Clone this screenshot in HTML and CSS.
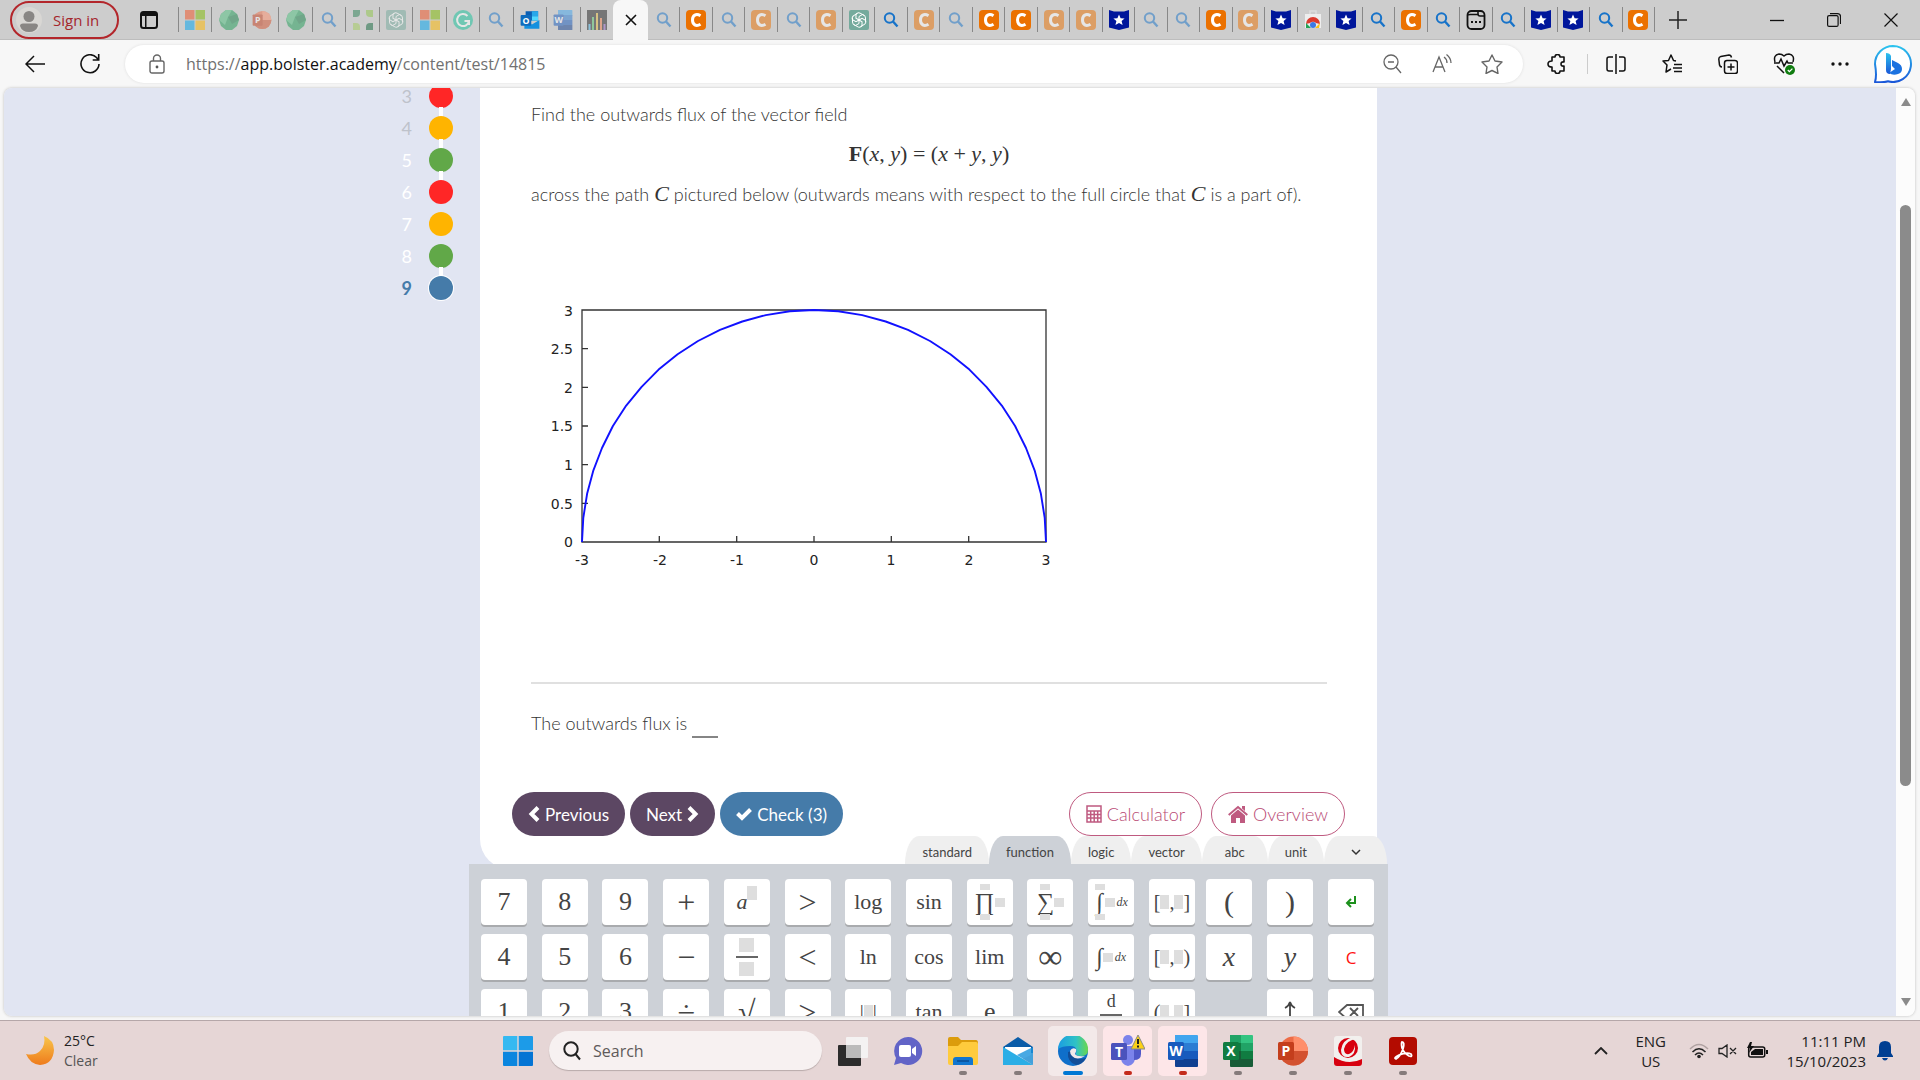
FILE: index.html
```html
<!DOCTYPE html>
<html lang="en">
<head>
    <meta charset="UTF-8">
    <meta name="viewport" content="width=device-width, initial-scale=1.0">
    <title>Bolster Academy</title>
    <link rel="stylesheet" href="styles.css">
</head>
<body>

    <!-- shared icons -->
    <svg class="sprite" xmlns="http://www.w3.org/2000/svg">
        <symbol id="ms" viewBox="0 0 20 20"><path fill="#f25022" d="M0 0h9.500v9.500H0z"/><path fill="#7fba00" d="M10.500 0H20v9.500h-9.500z"/><path fill="#00a4ef" d="M0 10.500h9.500V20H0z"/><path fill="#ffb900" d="M10.500 10.500H20V20h-9.500z"/></symbol>
        <symbol id="gem" viewBox="0 0 20 20"><path fill="#1f9d57" d="M7 0h6l5 4 2 6-2 6-5 4H7l-5-4-2-6 2-6z"/><path fill="#4fc07f" d="M7 0h6l-4 7-7-3zM2 4l7 3-3 8-6-5z"/><path fill="#168048" d="M9 7l9-3 2 6-7 4z"/></symbol>
        <symbol id="find" viewBox="0 0 20 20"><circle cx="8.500" cy="8" r="4.700" fill="none" stroke="#1773c9" stroke-width="2"/><path stroke="#1773c9" stroke-width="2.400" d="M12 11.500l4.500 5"/></symbol>
        <symbol id="squares" viewBox="0 0 20 20"><path fill="#2d8257" d="M0 0h7v3q0 4-4 4H0z"/><path fill="#8fc74a" d="M13 0h7v7h-3q-4 0-4-4z"/><path fill="#a3cc5b" d="M0 13h3q4 0 4 4v3H0z"/><path fill="#14683d" d="M13 20v-3q0-4 4-4h3v7z"/></symbol>
        <symbol id="gpt" viewBox="0 0 20 20"><rect width="20" height="20" rx="2" fill="#74aa9c"/><g fill="none" stroke="#fff" stroke-width="1"><path id="petal" d="M10 10.500V6.500l3.500-2q3 .5 3 3.500v4"/><path d="M10 10.500V6.500l3.500-2q3 .5 3 3.500v4" transform="rotate(60 10 10)"/><path d="M10 10.500V6.500l3.500-2q3 .5 3 3.500v4" transform="rotate(120 10 10)"/><path d="M10 10.500V6.500l3.500-2q3 .5 3 3.500v4" transform="rotate(180 10 10)"/><path d="M10 10.500V6.500l3.500-2q3 .5 3 3.500v4" transform="rotate(240 10 10)"/><path d="M10 10.500V6.500l3.500-2q3 .5 3 3.500v4" transform="rotate(300 10 10)"/></g></symbol>
        <symbol id="grammarly" viewBox="0 0 20 20"><circle cx="10" cy="10" r="10" fill="#15c39a"/><path fill="none" stroke="#fff" stroke-width="2" d="M14.500 6A6 6 0 1 0 16 11h-4.500M16 11v4"/></symbol>
        <symbol id="bars" viewBox="0 0 20 20"><path fill="#222" d="M0 0h20v20H0z"/><path fill="#4cb8ec" d="M1.500 14h2v6h-2z"/><path fill="#53c26b" d="M5 7h2v13H5z"/><path fill="#e2b93b" d="M9 3h2v17H9z"/><path fill="#ee7c4b" d="M13 8h2v12h-2z"/><path fill="#9261c4" d="M16.500 14h2v6h-2z"/></symbol>
        <symbol id="chegg" viewBox="0 0 20 20"><rect width="20" height="20" rx="4" fill="#eb7100"/><path fill="none" stroke="#fff" stroke-width="3" d="M14.500 5.800C10 3 6.500 5.500 6.500 10s3.500 7 8 4.200"/></symbol>
        <symbol id="star-flag" viewBox="0 0 20 20"><path fill="#00169b" d="M0 0l5 1.500h10L20 0v17.500L10 20 0 17.500z"/><path fill="#fff" d="M10 4.500l1.600 3.700 4 .3-3 2.600 1 4-3.600-2.200-3.600 2.200 1-4-3-2.600 4-.3z"/></symbol>
        <symbol id="store" viewBox="0 0 20 20"><path fill="#eee" d="M2 4h16v14H2z"/><path fill="none" stroke="#ddd" stroke-width="1.500" d="M7 4V1h6v3"/><path fill="#dc3b2e" d="M3 14a7 7 0 0 1 14 0l-4-1a4 4 0 0 0-6 0z"/><path fill="#21a354" d="M3 13l5 5H3z"/><path fill="#fbc116" d="M17 13l-5 5h4z"/><circle cx="10" cy="15" r="3" fill="#3c79e6"/></symbol>
        <symbol id="app" viewBox="0 0 20 20"><rect x="1.500" y="1" width="17" height="18" rx="4" fill="none" stroke="#111" stroke-width="1.800"/><path fill="none" stroke="#111" stroke-width="1.600" d="M12 1v3q0 2 2 2h4.500M2 5.500q0-1 2-1h8"/><path stroke="#111" stroke-width="2" stroke-dasharray="2 2" d="M5 12h10"/></symbol>
        <symbol id="word" viewBox="0 0 30 32"><path fill="#41a5ee" d="M7 0h22q1 0 1 1v8H7z"/><path fill="#2b7cd3" d="M7 8h23v8H7z"/><path fill="#185abd" d="M7 16h23v8H7z"/><path fill="#103f91" d="M7 24h23v7q0 1-1 1H8q-1 0-1-1z"/><rect y="7" width="16" height="18" rx="1.500" fill="#185abd"/><text x="8" y="21" class="logo-letter">W</text></symbol>
        <symbol id="excel" viewBox="0 0 30 32"><path fill="#21a366" d="M7 0h12v8H7z"/><path fill="#33c481" d="M18 0h11q1 0 1 1v7H18z"/><path fill="#107c41" d="M7 8h12v8H7zM18 16h12v8H18z"/><path fill="#21a366" d="M18 8h12v8H18z"/><path fill="#185c37" d="M7 16h11v8h12v7q0 1-1 1H8q-1 0-1-1z"/><rect y="7" width="16" height="18" rx="1.500" fill="#107c41"/><text x="8" y="21" class="logo-letter">X</text></symbol>
        <symbol id="ppt" viewBox="0 0 30 32"><circle cx="15.500" cy="16" r="14.500" fill="#ed6c47"/><path fill="#ff8f6b" d="M15.500 1.500A14.500 14.500 0 0 1 30 16H15.500z"/><path fill="#d35230" d="M1 16h29a14.500 14.500 0 0 1-29 0z"/><rect y="7" width="16" height="18" rx="1.500" fill="#c43e1c"/><text x="8" y="21" class="logo-letter">P</text></symbol>
        <symbol id="outlook" viewBox="0 0 30 32"><path fill="#0a5fb4" d="M8 2h20v15H8z"/><path fill="#28a8ea" d="M18 2h10v8H18z"/><path fill="#50d9ff" d="M18 10h10v7H18z"/><path fill="#1490df" d="M6 16l12 7 12-7v14H6z"/><rect y="8" width="17" height="17" rx="1.500" fill="#0f6cbd"/><text x="8.500" y="22" class="logo-letter">O</text></symbol>
        <symbol id="winlogo" viewBox="0 0 30 30"><path fill="#35b9f1" d="M0 1q0-1 1-1h13.300v14.300H0z"/><path fill="#1c9be8" d="M15.700 0H29q1 0 1 1v13.300H15.700z"/><path fill="#0b86df" d="M0 15.700h14.300V30H1q-1 0-1-1z"/><path fill="#0474d4" d="M15.700 15.700H30V29q0 1-1 1H15.700z"/></symbol>
    </svg>

    <header class="tab-strip">
        <button class="sign-in">
            <svg width="26" height="26" viewBox="0 0 26 26"><circle cx="13" cy="13" r="13" fill="#d9d7d4"/><circle cx="13" cy="9.500" r="5.500" fill="#898684"/><path fill="#898684" d="M4 19q0-2.500 3-2.500h12q3 0 3 2.500-2 6-9 6t-9-6z"/></svg>
            Sign in
        </button>
        <button class="tab-menu" aria-label="Tab actions">
            <svg width="18" height="18" viewBox="0 0 18 18"><rect x="1" y="1" width="16" height="16" rx="2.500" fill="none" stroke="#111" stroke-width="2"/><path fill="#111" d="M1 1h16v4H1zM5 5h1.500v12H5z"/></svg>
        </button>

        <nav class="tabs">
            <div class="tab-group tab-group-left">
                <button class="tab dim"><svg><use href="#ms"/></svg></button>
                <button class="tab dim"><svg><use href="#gem"/></svg></button>
                <button class="tab dim"><svg><use href="#ppt"/></svg></button>
                <button class="tab dim"><svg><use href="#gem"/></svg></button>
                <button class="tab dim"><svg><use href="#find"/></svg></button>
                <button class="tab dim"><svg><use href="#squares"/></svg></button>
                <button class="tab dim"><svg><use href="#gpt"/></svg></button>
                <button class="tab dim"><svg><use href="#ms"/></svg></button>
                <button class="tab dim"><svg><use href="#grammarly"/></svg></button>
                <button class="tab dim"><svg><use href="#find"/></svg></button>
                <button class="tab"><svg><use href="#outlook"/></svg></button>
                <button class="tab dim"><svg><use href="#word"/></svg></button>
                <button class="tab dim"><svg><use href="#bars"/></svg></button>
            </div>
            <button class="tab-active" aria-label="Close tab">
                <svg width="12" height="12" viewBox="0 0 12 12"><path stroke="#111" stroke-width="1.600" d="M1 1l10 10M11 1L1 11"/></svg>
            </button>
            <div class="tab-group tab-group-right">
                <button class="tab dim"><svg><use href="#find"/></svg></button>
                <button class="tab"><svg><use href="#chegg"/></svg></button>
                <button class="tab dim"><svg><use href="#find"/></svg></button>
                <button class="tab dim"><svg><use href="#chegg"/></svg></button>
                <button class="tab dim"><svg><use href="#find"/></svg></button>
                <button class="tab dim"><svg><use href="#chegg"/></svg></button>
                <button class="tab"><svg><use href="#gpt"/></svg></button>
                <button class="tab"><svg><use href="#find"/></svg></button>
                <button class="tab dim"><svg><use href="#chegg"/></svg></button>
                <button class="tab dim"><svg><use href="#find"/></svg></button>
                <button class="tab"><svg><use href="#chegg"/></svg></button>
                <button class="tab"><svg><use href="#chegg"/></svg></button>
                <button class="tab dim"><svg><use href="#chegg"/></svg></button>
                <button class="tab dim"><svg><use href="#chegg"/></svg></button>
                <button class="tab"><svg><use href="#star-flag"/></svg></button>
                <button class="tab dim"><svg><use href="#find"/></svg></button>
                <button class="tab dim"><svg><use href="#find"/></svg></button>
                <button class="tab"><svg><use href="#chegg"/></svg></button>
                <button class="tab dim"><svg><use href="#chegg"/></svg></button>
                <button class="tab"><svg><use href="#star-flag"/></svg></button>
                <button class="tab"><svg><use href="#store"/></svg></button>
                <button class="tab"><svg><use href="#star-flag"/></svg></button>
                <button class="tab"><svg><use href="#find"/></svg></button>
                <button class="tab"><svg><use href="#chegg"/></svg></button>
                <button class="tab"><svg><use href="#find"/></svg></button>
                <button class="tab"><svg><use href="#app"/></svg></button>
                <button class="tab"><svg><use href="#find"/></svg></button>
                <button class="tab"><svg><use href="#star-flag"/></svg></button>
                <button class="tab"><svg><use href="#star-flag"/></svg></button>
                <button class="tab"><svg><use href="#find"/></svg></button>
                <button class="tab"><svg><use href="#chegg"/></svg></button>
            </div>
        </nav>

        <button class="new-tab" aria-label="New tab"><svg width="18" height="18" viewBox="0 0 18 18"><path stroke="#222" stroke-width="1.500" d="M9 0v18M0 9h18"/></svg></button>
        <div class="window-controls">
            <button aria-label="Minimize"><svg width="14" height="14" viewBox="0 0 14 14"><path stroke="#111" stroke-width="1.300" d="M0 7.500h14"/></svg></button>
            <button aria-label="Restore"><svg width="14" height="14" viewBox="0 0 14 14"><g fill="none" stroke="#111" stroke-width="1.200"><rect x=".6" y="2.600" width="10.500" height="10.800" rx="1.500"/><path d="M3 .6h7.500q3 0 3 3V11"/></g></svg></button>
            <button aria-label="Close"><svg width="14" height="14" viewBox="0 0 14 14"><path stroke="#111" stroke-width="1.200" d="M.5.500l13 13M13.500.500l-13 13"/></svg></button>
        </div>
    </header>

    <div class="toolbar">
        <button class="tool-button" aria-label="Back"><svg width="20" height="18" viewBox="0 0 20 18"><path fill="none" stroke="#111" stroke-width="1.500" d="M20 9H1M9 1L1 9l8 8"/></svg></button>
        <button class="tool-button" aria-label="Refresh"><svg width="20" height="20" viewBox="0 0 20 20"><path fill="none" stroke="#111" stroke-width="1.600" d="M19 10A9 9 0 1 1 16.500 3.500L18.500 6M18.700 0v6h-6"/></svg></button>
        <div class="address-bar">
            <svg width="16" height="20" viewBox="0 0 16 20"><g fill="none" stroke="#666" stroke-width="1.400"><rect x="1" y="7" width="14" height="12" rx="2"/><path d="M4.500 7V4.500a3.500 3.500 0 0 1 7 0V7"/></g><circle cx="8" cy="13" r="1.400" fill="#555"/></svg>
            <span class="url">https://<b>app.bolster.academy</b>/content/test/14815</span>
            <button aria-label="Zoom out"><svg width="20" height="20" viewBox="0 0 20 20"><g fill="none" stroke="#666" stroke-width="1.300"><circle cx="9" cy="8" r="7"/><path d="M14 13l5 6M6 8h6"/></g></svg></button>
            <button aria-label="Read aloud"><svg width="20" height="20" viewBox="0 0 20 20"><g fill="none" stroke="#666" stroke-width="1.300"><path d="M1 18L7 3l6 15M3 13h8M12 3q3 2 3 6M14.500.500Q19 4 19 9"/></g></svg></button>
            <button aria-label="Favorite"><svg width="22" height="20" viewBox="0 0 22 20"><path fill="none" stroke="#666" stroke-width="1.400" stroke-linejoin="round" d="M11 1l3 6 7 1-5 5 1 6.500-6-3-6 3L6 13 1 8l7-1z"/></svg></button>
        </div>
        <div class="extensions">
            <button aria-label="Extensions"><svg width="20" height="20" viewBox="0 0 20 20"><path fill="none" stroke="#111" stroke-width="1.600" stroke-linejoin="round" d="M5 3h3q0-2.500 2.500-2.500T13 3h4v5q-3-.5-3 2t3 2v5h-4q0 2.500-2.500 2.500T8 17H5v-4q-4 0-4-3t4-3z"/></svg></button>
            <span class="divider"></span>
            <button aria-label="Split screen"><svg width="20" height="20" viewBox="0 0 20 20"><path fill="none" stroke="#111" stroke-width="1.500" d="M7 3H3Q1 3 1 5v10q0 2 2 2h4M13 3h4q2 0 2 2v10q0 2-2 2h-4M10 0v20"/></svg></button>
            <button aria-label="Favorites"><svg width="20" height="20" viewBox="0 0 20 20"><path fill="none" stroke="#111" stroke-width="1.500" stroke-linejoin="round" d="M14 7l-2.500-.5L9 1 6.500 6.500 1 7l4 4-1 7 5-3M12 10.500h8M11 14h9M12 17.500h8"/></svg></button>
            <button aria-label="Collections"><svg width="20" height="20" viewBox="0 0 20 20"><g fill="none" stroke="#111" stroke-width="1.500"><rect x="6.500" y="6.500" width="13" height="13" rx="2.500"/><path d="M4 13q-2 0-2.500-2L.800 5q0-2 2-2.500L11 1q2 0 2.500 2.500M13 9.500v7M9.500 13h7"/></g></svg></button>
            <button aria-label="Browser essentials"><svg width="22" height="22" viewBox="0 0 22 22"><path fill="none" stroke="#111" stroke-width="1.500" d="M2 9Q0 2 6 1q3 0 5 2 2-2 5-2 6 1 4 8M1 10h5l2-4 3 7 3-5 1 2h5M4 13l7 7"/><circle cx="17" cy="17" r="5" fill="#107c10"/><path fill="none" stroke="#fff" stroke-width="1.300" d="M14.800 17l1.600 1.600 3-3"/></svg></button>
            <button aria-label="Settings"><svg width="18" height="4" viewBox="0 0 18 4"><g fill="#111"><circle cx="2" cy="2" r="1.700"/><circle cx="9" cy="2" r="1.700"/><circle cx="16" cy="2" r="1.700"/></g></svg></button>
            <button aria-label="Bing chat"><svg width="38" height="38" viewBox="0 0 38 38"><defs><linearGradient id="bing" x1="0" y1="0" x2="0" y2="1"><stop offset="0" stop-color="#2cc3ee"/><stop offset="1" stop-color="#1a56d8"/></linearGradient></defs><path fill="#fff" stroke="url(#bing)" stroke-width="2" d="M19 1a18 18 0 1 1-5 35.300q-6 1.700-13 .700 2-6 0-18A18 18 0 0 1 19 1z"/><path fill="url(#bing)" d="M12 8q4 0 5 3v13l-1 5q-4 0-4-4z"/><path fill="#1b72e0" d="M18 15l6 3q4 2 4 6t-4 5q-5 2-9-1l6-4-3-3z"/></svg></button>
        </div>
    </div>

    <div class="viewport">
        <main class="page">
            <aside class="progress">
                <ol>
                    <li class="linked muted">3<span class="dot red"></span></li>
                    <li class="linked muted">4<span class="dot yellow"></span></li>
                    <li class="linked">5<span class="dot green"></span></li>
                    <li>6<span class="dot red"></span></li>
                    <li>7<span class="dot yellow"></span></li>
                    <li class="linked">8<span class="dot green"></span></li>
                    <li class="current">9<span class="dot blue"></span></li>
                </ol>
            </aside>

            <div class="content">
                <section class="card">
                    <div class="question">
                        <p>Find the outwards flux of the vector field</p>
                        <p class="formula"><b>F</b>(<i>x</i>, <i>y</i>) = (<i>x</i> + <i>y</i>, <i>y</i>)</p>
                        <p>across the path <i class="math">C</i> pictured below (outwards means with respect to the full circle that <i class="math">C</i> is a part of).</p>

                        <svg class="plot" width="560" height="300" viewBox="0 0 560 300">
                            <path fill="none" stroke="#333" stroke-width="1.300" d="M51 30h464v232H51zM51 223.300h6M51 184.700h6M51 146h6M51 107.300h6M51 68.700h6M128.300 262v-6M205.700 262v-6M283 262v-6M360.300 262v-6M437.700 262v-6"/>
                            <path fill="none" stroke="#11f" stroke-width="1.900" stroke-linejoin="round" d="M51 262L52.300 237.800 56.100 213.800 62.400 190.300 71 168 81.900 146 95.200 125.600 110.600 106.800 127.600 89.600 146.600 74.300 167 61 189 49.900 211.300 41.500 234.800 35.100 258.800 31.300 283 30 307.200 31.300 331.200 35.100 354.700 41.500 377 49.900 399 61 419.400 74.300 438.400 89.600 455.400 106.800 470.800 125.600 484.100 146 495 168 503.600 190.300 509.900 213.800 513.700 237.800 515 262"/>
                            <g text-anchor="end">
                                <text x="42" y="36">3</text><text x="42" y="74">2.5</text><text x="42" y="113">2</text><text x="42" y="151">1.5</text><text x="42" y="190">1</text><text x="42" y="229">0.5</text><text x="42" y="267">0</text>
                            </g>
                            <g text-anchor="middle">
                                <text x="51" y="285">-3</text><text x="129" y="285">-2</text><text x="206" y="285">-1</text><text x="283" y="285">0</text><text x="360" y="285">1</text><text x="438" y="285">2</text><text x="515" y="285">3</text>
                            </g>
                        </svg>

                        <hr>
                        <div class="answer">
                            <label for="flux">The outwards flux is</label>
                            <input type="text" id="flux">
                        </div>
                    </div>

                    <div class="actions">
                        <button class="btn purple"><svg width="12" height="16" viewBox="0 0 12 16"><path fill="none" stroke="#fff" stroke-width="4" d="M10 1.500L3.500 8l6.500 6.500"/></svg>Previous</button>
                        <button class="btn purple">Next<svg width="12" height="16" viewBox="0 0 12 16"><path fill="none" stroke="#fff" stroke-width="4" d="M2 1.500L8.500 8 2 14.500"/></svg></button>
                        <button class="btn blue"><svg width="16" height="14" viewBox="0 0 16 14"><path fill="none" stroke="#fff" stroke-width="4" d="M1.500 6.500l4.500 4.500 8.500-8.500"/></svg>Check (3)</button>
                        <span class="spacer"></span>
                        <button class="btn outline"><svg width="16" height="18" viewBox="0 0 16 18"><path fill="none" stroke="#bf5a80" stroke-width="1.500" d="M1 1h14v16H1zM1 6h14M1 9.500h14M1 13h14M4.700 6v11M8.200 6v11M11.700 6v11"/></svg>Calculator</button>
                        <button class="btn outline"><svg width="20" height="18" viewBox="0 0 20 18"><path fill="#bf5a80" d="M10 4.500l7 6V18h-5v-5H8v5H3v-7.500zM14 1h3v5l-3-2.500z"/><path fill="none" stroke="#bf5a80" stroke-width="2" d="M.700 10L10 2l9.300 8"/></svg>Overview</button>
                    </div>
                </section>

                <section class="keyboard">
                    <div class="key-tabs">
                        <button>standard</button>
                        <button class="selected">function</button>
                        <button>logic</button>
                        <button>vector</button>
                        <button class="wide">abc</button>
                        <button>unit</button>
                        <button aria-label="Hide"><svg width="10" height="7" viewBox="0 0 10 7"><path fill="none" stroke="#333" stroke-width="1.500" d="M1 1l4 4 4-4"/></svg></button>
                    </div>
                    <div class="keys">
                        <div class="pad main-pad">
                            <button>7</button>
                            <button>8</button>
                            <button>9</button>
                            <button class="op">+</button>
                            <button class="fn power"><i>a</i><span class="slot tall"></span></button>
                            <button class="op">&gt;</button>
                            <button class="fn">log</button>
                            <button class="fn">sin</button>
                            <button class="big-op"><span class="stack"><span class="slot low"></span>∏<span class="slot low"></span></span><span class="slot"></span></button>
                            <button class="big-op"><span class="stack"><span class="slot low"></span>∑<span class="slot low"></span></span><span class="slot"></span></button>
                            <button class="big-op"><span class="stack"><span class="slot low"></span>∫<span class="slot low"></span></span><span class="slot"></span><i class="dx">dx</i></button>
                            <button class="interval">[<span class="slot tall"></span>,<span class="slot tall"></span>]</button>

                            <button>4</button>
                            <button>5</button>
                            <button>6</button>
                            <button class="op">−</button>
                            <button class="fraction"><span class="slot tall"></span><span class="bar"></span><span class="slot tall"></span></button>
                            <button class="op">&lt;</button>
                            <button class="fn">ln</button>
                            <button class="fn">cos</button>
                            <button class="fn">lim</button>
                            <button class="infinity">∞</button>
                            <button class="big-op">∫<span class="slot"></span><i class="dx">dx</i></button>
                            <button class="interval">[<span class="slot tall"></span>,<span class="slot tall"></span>)</button>

                            <button>1</button>
                            <button>2</button>
                            <button>3</button>
                            <button class="op">÷</button>
                            <button class="op">√</button>
                            <button class="op">≥</button>
                            <button class="interval">|<span class="slot tall"></span>|</button>
                            <button class="fn">tan</button>
                            <button>e</button>
                            <button aria-label="Blank"></button>
                            <button class="fraction derivative">d<span class="bar"></span></button>
                            <button class="interval">(<span class="slot tall"></span>,<span class="slot tall"></span>]</button>
                        </div>
                        <div class="pad side-pad">
                            <button class="paren">(</button>
                            <button class="paren">)</button>
                            <button aria-label="Enter"><svg width="12" height="12" viewBox="0 0 12 12"><path fill="none" stroke="#1c901c" stroke-width="2" d="M10 0v7H3M6 3L2 7l4 4"/></svg></button>
                            <button class="variable"><i>x</i></button>
                            <button class="variable"><i>y</i></button>
                            <button class="clear">C</button>
                            <span></span>
                            <button aria-label="Shift"><svg width="12" height="24" viewBox="0 0 12 24"><path fill="none" stroke="#444" stroke-width="1.800" d="M6 24V2M1 8q4-2 5-6 1 4 5 6"/></svg></button>
                            <button aria-label="Backspace"><svg width="26" height="16" viewBox="0 0 26 16"><path fill="none" stroke="#555" stroke-width="1.800" d="M9 1h16v14H9L1 8zM12 4l8 8M20 4l-8 8"/></svg></button>
                        </div>
                    </div>
                </section>
            </div>
        </main>
        <div class="scrollbar">
            <span class="arrow up"></span>
            <span class="thumb"></span>
            <span class="arrow down"></span>
        </div>
    </div>

    <footer class="taskbar">
        <div class="weather">
            <svg width="28" height="29" viewBox="0 0 28 29"><defs><linearGradient id="moon" x1="0" y1="0" x2="0" y2="1"><stop offset="0" stop-color="#f9c64b"/><stop offset="1" stop-color="#ee7b1c"/></linearGradient></defs><path fill="url(#moon)" d="M18 0Q28 4 28 14q-1 14-14 15Q4 28 0 18q9 2 14-3 6-6 4-15z"/></svg>
            <div>25°C<br><span>Clear</span></div>
        </div>

        <div class="dock">
            <button class="dock-item" aria-label="Start"><svg width="30" height="30"><use href="#winlogo"/></svg></button>
            <label class="search">
                <svg width="18" height="20" viewBox="0 0 18 20"><g fill="none" stroke="#222" stroke-width="2"><circle cx="8" cy="8" r="6.700"/><path d="M12.500 13l4.500 5.500"/></g></svg>
                <input type="text" placeholder="Search" aria-label="Search">
            </label>
            <button class="dock-item" aria-label="Task view"><svg width="30" height="30" viewBox="0 0 30 30"><rect y="9" width="23" height="21" rx="1" fill="#2c2c2c"/><rect x="8" y="1" width="22" height="21" rx="1" fill="#f5f5f5" opacity=".9"/><path fill="#bbb" d="M8 9h15v13H8z"/></svg></button>
            <button class="dock-item" aria-label="Chat"><svg width="30" height="30" viewBox="0 0 30 30"><path fill="#6264c7" d="M15 1a14 14 0 1 1-7 26l-7 2 2-7A14 14 0 0 1 15 1z"/><rect x="6" y="9" width="12" height="12" rx="2" fill="#fff"/><path fill="#fff" d="M19 13l4-3v10l-4-3z"/></svg></button>
            <button class="dock-item running" aria-label="File Explorer"><svg width="30" height="28" viewBox="0 0 30 28"><path fill="#dc9c0c" d="M0 2q0-2 2-2h8l3 3h15q2 0 2 3v6H0z"/><path fill="#ffcb3d" d="M0 9h10l4-4h14q2 0 2 2v19q0 2-2 2H2q-2 0-2-2z"/><path fill="#1176cf" d="M5 28v-5q0-3 3-3h14q3 0 3 3v5z"/><path stroke="#084e95" stroke-width="1.500" d="M9 24h12"/></svg></button>
            <button class="dock-item running" aria-label="Mail"><svg width="30" height="28" viewBox="0 0 30 28"><path fill="#0a5ca8" d="M0 10L15 0l15 10v6H0z"/><path fill="#fff" d="M2 10h26v8L15 24 2 18z"/><path fill="#2baee6" d="M0 10l30 18H0z"/><path fill="#1c93dc" d="M30 10v18L14 18z" opacity=".8"/></svg></button>
            <button class="dock-item open active" aria-label="Edge"><svg width="30" height="30" viewBox="0 0 30 30"><defs><linearGradient id="edge"><stop offset="0" stop-color="#1b9de2"/><stop offset=".6" stop-color="#2fc2c6"/><stop offset="1" stop-color="#6bd84b"/></linearGradient></defs><circle cx="15" cy="15" r="15" fill="#0f6fca"/><path fill="url(#edge)" d="M0 13A15 15 0 0 1 30 14q0 6-7 6-6 0-5-3 2-7-6-7-8 0-12 3z"/><path fill="#124d97" d="M10 16q-1 10 8 13 7-1 10-7-12 3-14-7z"/><path fill="#f2e9ea" d="M12 15q2-4 6-2 1 2-1 5 2 3 10 2-8 5-13 0-2-2-2-5z"/></svg></button>
            <button class="dock-item open alert" aria-label="Teams"><svg width="34" height="32" viewBox="0 0 34 32"><circle cx="17" cy="5" r="5" fill="#7b83eb"/><path fill="#7b83eb" d="M10 11h14v11q0 8-7 9-7-1-7-9z"/><path fill="#5059c9" d="M23 11h7v8q0 6-7 6z"/><rect y="8" width="16" height="17" rx="1.500" fill="#4b53bc"/><text x="8" y="22" class="logo-letter">T</text><path fill="#fcd116" stroke="#888" d="M27 0l7 14H20z"/><path stroke="#222" stroke-width="2" d="M27 4v5M27 10.500v2"/></svg></button>
            <button class="dock-item open alert" aria-label="Word"><svg width="30" height="32"><use href="#word"/></svg></button>
            <button class="dock-item running" aria-label="Excel"><svg width="30" height="32"><use href="#excel"/></svg></button>
            <button class="dock-item running" aria-label="PowerPoint"><svg width="30" height="32"><use href="#ppt"/></svg></button>
            <button class="dock-item running" aria-label="Trend Micro"><svg width="28" height="30" viewBox="0 0 28 30"><rect width="28" height="30" rx="3" fill="#f2f0ee"/><path fill="#d7000f" d="M0 21q14 9 28 2v4q0 3-3 3H3q-3 0-3-3z"/><circle cx="14" cy="12" r="10" fill="#d7000f"/><path fill="#f2f0ee" d="M23 3Q12 4 10 13q0 6 5 5 5-2 6-9 1 9-6 12-8 1-8-7Q8 4 19 1z"/><path fill="#d7000f" d="M18 7q-5 2-5 8 4 1 5-8z"/></svg></button>
            <button class="dock-item running" aria-label="Acrobat"><svg width="28" height="28" viewBox="0 0 28 28"><rect width="28" height="28" rx="4" fill="#b30b00"/><path fill="none" stroke="#fff" stroke-width="1.800" d="M13 5q3 0 1 7-3 8-7 10-3-1 3-4 8-3 12-1 2 3-2 2-5-3-7-8-1-5 0-6z"/></svg></button>
        </div>

        <div class="tray">
            <svg width="14" height="8" viewBox="0 0 14 8"><path fill="none" stroke="#222" stroke-width="1.800" d="M1 7l6-6 6 6"/></svg>
            <div class="language">ENG<br>US</div>
            <div class="status">
                <svg width="20" height="16" viewBox="0 0 20 16"><path fill="none" stroke="#b0a2a2" stroke-width="1.500" d="M1 6q9-9 18 0"/><path fill="none" stroke="#222" stroke-width="1.500" d="M3.500 9q6.500-6.500 13 0M6 12q4-4 8 0"/><circle cx="10" cy="13.500" r="1.800" fill="#222"/></svg>
                <svg width="20" height="14" viewBox="0 0 20 14"><path fill="none" stroke="#222" stroke-width="1.300" d="M1 4.500h3L9 1v12L4 9.500H1zM12 4l6 6M18 4l-6 6"/></svg>
                <svg width="21" height="17" viewBox="0 0 21 17"><rect x="1.700" y="5" width="16" height="10" rx="2" fill="none" stroke="#111" stroke-width="1.500"/><path fill="#111" d="M8 7h8v6H4v-3zM19 8h2v4h-2zM3 0L0 6h3l-1 5 5-7H4l1-4z"/></svg>
            </div>
            <div class="clock">11:11 PM<br>15/10/2023</div>
            <svg width="16" height="20" viewBox="0 0 16 20"><path fill="#003f92" d="M8 0q6 0 6 6v6l2 3v1H0v-1l2-3V6q0-6 6-6zM5 17h6q-1 2.500-3 2.500T5 17z"/></svg>
        </div>
    </footer>

</body>
</html>
```

FILE: styles.css
```css
* {
    box-sizing: border-box;
}
body {
    margin: 0;
    height: 100vh;
    display: flex;
    flex-direction: column;
    overflow: hidden;
    background-color: #f7f7f7;
    font-family: "Open Sans", "Noto Sans", sans-serif;
    color: #222;
}
button {
    display: flex;
    align-items: center;
    justify-content: center;
    padding: 0;
    border: none;
    background: none;
    font: inherit;
    color: inherit;
    cursor: pointer;
}
.sprite {
    display: none;
}
.logo-letter {
    font: bold 14px "Open Sans", sans-serif;
    fill: white;
    text-anchor: middle;
}

/* tab strip */
.tab-strip {
    display: flex;
    align-items: center;
    height: 40px;
    padding-left: 10px;
    background-color: #cdcdcd;
    border-bottom: 1px solid #bdbdbd;
}
.sign-in {
    width: 109px;
    height: 38px;
    gap: 11px;
    justify-content: flex-start;
    padding-left: 4px;
    border: 2px solid #b3262b;
    border-radius: 19px;
    color: #a4262c;
    font-size: 15px;
    white-space: nowrap;
}
.tab-menu {
    width: 59px;
}
.tabs {
    flex: 1;
    display: flex;
    height: 40px;
}
.tab-group {
    display: flex;
    align-items: center;
}
.tab-group-left {
    flex: 435;
}
.tab-group-right {
    flex: 1007;
}
.tab {
    flex: 1;
    height: 25px;
    border-right: 1px solid #888;
}
.tab-group-left .tab:first-child {
    border-left: 1px solid #888;
}
.tab-group-left .tab:last-child {
    border-right: none;
}
.tab svg {
    width: 20px;
    height: 20px;
}
.tab.dim svg {
    opacity: 0.5;
}
.tab-active {
    flex: 35;
    background-color: #f7f7f7;
    border-radius: 8px 8px 0 0;
}
.new-tab {
    width: 46px;
}
.window-controls {
    display: flex;
    margin: 0 1px 0 47px;
}
.window-controls button {
    width: 57px;
    height: 38px;
}

/* toolbar */
.toolbar {
    display: flex;
    align-items: center;
    height: 48px;
    padding-left: 7px;
}
.tool-button {
    width: 55px;
}
.address-bar {
    flex: 1;
    display: flex;
    align-items: center;
    height: 38px;
    margin-left: 8px;
    padding: 0 6px 0 24px;
    background-color: white;
    border-radius: 19px;
    box-shadow: 0 0 3px #ddd;
}
.address-bar button {
    width: 50px;
}
.url {
    flex: 1;
    margin-left: 21px;
    font-size: 16px;
    color: #717171;
}
.url b {
    font-weight: normal;
    color: #111;
}
.extensions {
    display: flex;
    align-items: center;
    padding: 0 2px 0 6px;
}
.extensions button {
    width: 56px;
}
.extensions button:last-child {
    width: 50px;
}
.divider {
    width: 1px;
    height: 20px;
    margin-left: 2px;
    background-color: #ccc;
}

/* page area */
.viewport {
    flex: 1;
    min-height: 0;
    display: flex;
    margin: 0 5px 4px 4px;
    border-radius: 8px;
    overflow: hidden;
    box-shadow: 0 0 3px #bbb;
}
.page {
    flex: 1;
    display: grid;
    grid-template-columns: 476fr 897fr 519fr;
    overflow: hidden;
    background-color: #e1e5f2;
    font-family: Lato, sans-serif;
    font-weight: 300;
}
.progress ol {
    margin: -8px 27px 0 0;
    padding: 0;
    list-style: none;
}
.progress li {
    position: relative;
    display: flex;
    align-items: center;
    justify-content: flex-end;
    gap: 17px;
    height: 32px;
    font-size: 18px;
    font-weight: 400;
    color: white;
}
.progress li.muted {
    color: #bec2cb;
}
.progress li.current {
    color: #457ba9;
    font-weight: bold;
}
/* line down to the next question */
.progress li.linked::after {
    content: "";
    position: absolute;
    right: 10px;
    top: 27px;
    width: 4px;
    height: 10px;
    background-color: white;
}
.dot {
    width: 24px;
    height: 24px;
    border-radius: 50%;
}
.red {
    background-color: #ff2626;
}
.yellow {
    background-color: #ffb400;
}
.green {
    background-color: #61a848;
}
.current .dot {
    background-color: #457ba9;
    box-shadow: 0 0 0 1px white;
}
.card {
    padding: 14px 32px 33px;
    background-color: white;
    border-radius: 0 0 30px 30px;
}
.question {
    padding: 0 18px 0 19px;
    font-size: 18px;
    line-height: 24px;
    color: #333;
}
.question p {
    margin: 0 0 16px;
}
.question .formula {
    text-align: center;
    font-family: "Liberation Serif", serif;
    font-size: 22px;
    font-weight: 400;
}
.math {
    font-family: "Liberation Serif", serif;
    font-size: 22px;
    font-weight: 400;
    line-height: 20px;
}
.plot {
    display: block;
    margin-top: 74px;
    font-family: "DejaVu Sans", sans-serif;
    font-size: 14px;
    font-weight: 400;
    fill: #222;
}
hr {
    margin: 102px 0 27px;
    border: none;
    border-top: 2px solid #e0e0e0;
}
.answer {
    display: flex;
    gap: 5px;
    height: 27px;
}
.answer input {
    width: 26px;
    padding: 0;
    border: none;
    border-bottom: 2px solid #858585;
    background: none;
}
.actions {
    display: flex;
    gap: 5px;
    margin-top: 54px;
}
.spacer {
    flex: 1;
}
.btn {
    height: 44px;
    padding: 0 16px;
    gap: 5px;
    border-radius: 22px;
    font-size: 17px;
    font-weight: 400;
    color: white;
    white-space: nowrap;
}
.purple {
    background-color: #5c4763;
}
.btn.blue {
    background-color: #457ba9;
}
.outline {
    border: 1px solid #bf5a80;
    color: #b94a74;
    background-color: white;
    font-size: 18px;
    font-weight: 300;
}
.outline + .outline {
    margin-left: 4px;
}

/* math keyboard */
.keyboard {
    position: relative;
    margin: -33px -11px 0;
    font-family: "Liberation Serif", serif;
    font-weight: 400;
    color: #444;
}
.key-tabs {
    display: flex;
    justify-content: flex-end;
    padding-right: 1px;
    font-family: Lato, sans-serif;
    font-size: 13px;
}
.key-tabs button {
    height: 28px;
    padding: 4px 17px 0;
    background-color: #efefef;
    border-radius: 14px 14px 0 0 / 28px 28px 0 0;
}
.key-tabs .wide {
    padding: 4px 23px 0;
}
.key-tabs button:last-child {
    padding: 4px 26px 0 27px;
}
.key-tabs .selected {
    background-color: #cdd1d7;
}
.keys {
    display: flex;
    justify-content: space-between;
    height: 170px;
    padding: 15px 14px 0 12px;
    background-color: #cdd1d7;
}
.pad {
    display: grid;
    justify-content: space-between;
    align-content: start;
    row-gap: 9px;
}
.main-pad {
    flex: 0 0 714px;
    grid-template-columns: repeat(12, 46px);
}
.side-pad {
    flex: 0 0 168px;
    grid-template-columns: repeat(3, 46px);
}
.pad button {
    width: 46px;
    height: 46px;
    background-color: white;
    border-radius: 4px;
    box-shadow: 0 2px 0 #a9abae;
    font-size: 26px;
}
.pad .fn {
    font-size: 22px;
}
.pad .op {
    font-size: 32px;
}
.pad .paren {
    font-size: 30px;
}
.pad .variable {
    font-size: 28px;
}
.pad .infinity {
    font-size: 34px;
}
.pad .clear {
    font-family: "Open Sans", sans-serif;
    font-size: 17px;
    color: #f11;
}
.slot {
    width: 10px;
    height: 9px;
    background-color: #dedede;
}
.slot.low {
    height: 6px;
}
.slot.tall {
    height: 14px;
}
.power .slot {
    margin-bottom: 18px;
}
.pad .big-op {
    font-size: 24px;
    line-height: 24px;
}
.stack {
    display: flex;
    flex-direction: column;
    align-items: center;
}
.dx {
    margin-left: 2px;
    font-size: 12px;
}
.pad .interval {
    font-size: 20px;
}
.interval .slot {
    width: 9px;
}
.pad .fraction {
    flex-direction: column;
    gap: 4px;
}
.fraction .slot {
    width: 15px;
}
.bar {
    width: 22px;
    height: 2px;
    background-color: #666;
}
.pad .derivative {
    justify-content: flex-start;
    padding-top: 3px;
    font-size: 18px;
    line-height: 18px;
}

/* scrollbar */
.scrollbar {
    display: flex;
    flex-direction: column;
    align-items: center;
    width: 19px;
    padding: 10px 0 10px;
    background-color: #fcfcfc;
}
.arrow {
    border: 5px solid transparent;
}
.up {
    border-top: none;
    border-bottom: 8px solid #8b8b8b;
}
.down {
    margin-top: auto;
    border-bottom: none;
    border-top: 8px solid #8b8b8b;
}
.thumb {
    width: 11px;
    height: 64%;
    margin-top: 99px;
    border-radius: 6px;
    background-color: #8b8b8b;
}

/* taskbar */
.taskbar {
    display: grid;
    grid-template-columns: 1fr auto 1fr;
    align-items: center;
    height: 60px;
    background-color: #e6d6d6;
    border-top: 1px solid #b5a7a9;
    font-size: 14px;
    line-height: 20px;
}
.weather {
    display: flex;
    align-items: center;
    gap: 10px;
    padding-left: 26px;
}
.weather span {
    color: #555;
}
.dock {
    display: flex;
    align-items: center;
}
.dock-item {
    position: relative;
    width: 55px;
    height: 50px;
}
.search {
    display: flex;
    align-items: center;
    gap: 12px;
    width: 273px;
    height: 39px;
    margin: 0 3px 0 4px;
    padding: 0 14px;
    border-radius: 20px;
    background-color: #f7f1f1;
    box-shadow: 0 1px 1px #b9abab;
}
.search input {
    flex: 1;
    min-width: 0;
    padding: 0;
    border: none;
    background: none;
    font: 16px "Open Sans", sans-serif;
}
.search input::placeholder {
    color: #5f5a5a;
}
.open {
    width: 49px;
    margin: 0 3px;
    border-radius: 5px;
    background-color: #fde6e8;
}
.active {
    background-color: #f3e9e9;
}
.running::after,
.open::after {
    content: "";
    position: absolute;
    bottom: 1px;
    width: 8px;
    height: 4px;
    border-radius: 2px;
    background-color: #857b7b;
}
.alert::after {
    background-color: #c42b1c;
}
.active::after {
    width: 20px;
    background-color: #0078d4;
}
.tray {
    display: flex;
    align-items: center;
    justify-content: flex-end;
    padding-right: 27px;
    font-size: 15px;
}
.language {
    margin: 0 23px 0 27px;
    text-align: center;
}
.status {
    display: flex;
    align-items: center;
    gap: 9px;
}
.clock {
    width: 84px;
    margin: 0 11px 0 14px;
    text-align: right;
}
```
